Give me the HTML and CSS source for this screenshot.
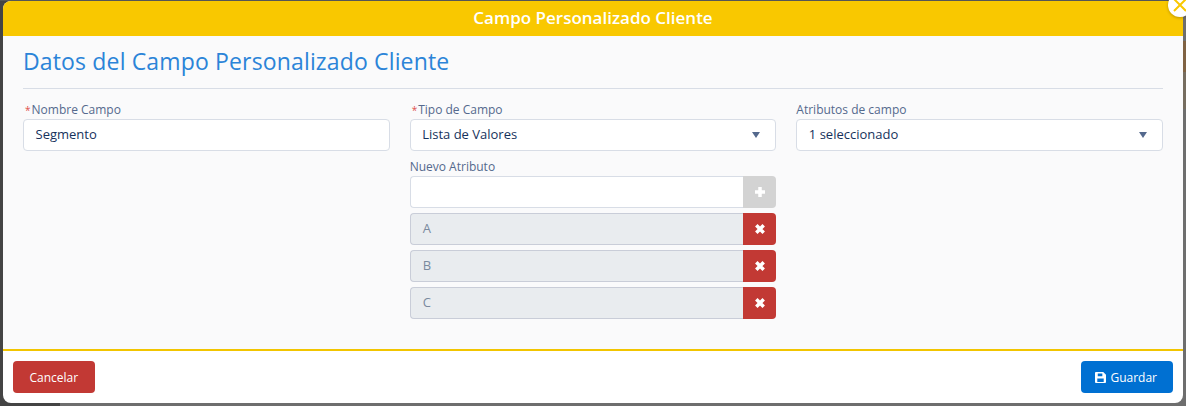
FILE: index.html
```html
<!DOCTYPE html>
<html lang="en">
<head>
    <meta charset="UTF-8">
    <meta name="viewport" content="width=device-width, initial-scale=1.0">
    <title>Campo Personalizado Cliente</title>
    <link rel="stylesheet" href="styles.css">
</head>
<body>
    <div class="modal">
        <button class="close-button">
            <svg viewBox="0 0 14 14" width="14" height="14"><path d="M1 1L13 13M13 1L1 13"></path></svg>
        </button>
        <div class="modal-header">Campo Personalizado Cliente</div>

        <div class="modal-body">
            <div class="section-title">Datos del Campo Personalizado Cliente</div>

            <div class="form-grid">
                <div class="form-col">
                    <label class="form-label"><span class="required">*</span>Nombre Campo</label>
                    <div class="input">Segmento</div>
                </div>

                <div class="form-col">
                    <label class="form-label"><span class="required">*</span>Tipo de Campo</label>
                    <div class="input select">
                        Lista de Valores
                        <span class="caret"></span>
                    </div>

                    <label class="form-label label-spaced">Nuevo Atributo</label>
                    <div class="input-group">
                        <div class="group-field"></div>
                        <div class="group-button add-button">
                            <svg viewBox="0 0 12 12" width="12" height="12"><path d="M6 1V11M1 6H11"></path></svg>
                        </div>
                    </div>
                    <div class="input-group">
                        <div class="group-field disabled">A</div>
                        <div class="group-button remove-button">
                            <svg viewBox="0 0 12 12" width="12" height="12"><path d="M2.300 2.300L9.700 9.700M9.700 2.300L2.300 9.700"></path></svg>
                        </div>
                    </div>
                    <div class="input-group">
                        <div class="group-field disabled">B</div>
                        <div class="group-button remove-button">
                            <svg viewBox="0 0 12 12" width="12" height="12"><path d="M2.300 2.300L9.700 9.700M9.700 2.300L2.300 9.700"></path></svg>
                        </div>
                    </div>
                    <div class="input-group">
                        <div class="group-field disabled">C</div>
                        <div class="group-button remove-button">
                            <svg viewBox="0 0 12 12" width="12" height="12"><path d="M2.300 2.300L9.700 9.700M9.700 2.300L2.300 9.700"></path></svg>
                        </div>
                    </div>
                </div>

                <div class="form-col">
                    <label class="form-label">Atributos de campo</label>
                    <div class="input select">
                        1 seleccionado
                        <span class="caret"></span>
                    </div>
                </div>
            </div>
        </div>

        <div class="modal-footer">
            <button class="button button-cancel">Cancelar</button>
            <button class="button button-save">
                <svg viewBox="0 0 12 12" width="11" height="11"><path fill-rule="evenodd" d="M1 0H9L12 3V11A1 1 0 0 1 11 12H1A1 1 0 0 1 0 11V1A1 1 0 0 1 1 0ZM3 1.500V4.500H8V1.500ZM2.500 7V10.800H9.500V7Z"></path></svg>
                Guardar
            </button>
        </div>
    </div>
</body>
</html>
```

FILE: styles.css
```css
html {
    overflow: hidden;
}

body {
    font-family: "Open Sans", "Noto Sans", Arial, sans-serif;
    background-color: #6e6e6e;
    background-image:
        linear-gradient(#7f6243, #7f6243),
        linear-gradient(#766d60, #766d60),
        linear-gradient(#565656, #565656),
        linear-gradient(to right, #444444 60px, #6e6e6e 60px);
    background-repeat: no-repeat;
    background-position: right 0 top 41px, right 0 top 72px, 0 0, 0 0;
    background-size: 3px 31px, 3px 37px, 100% 1px, 100% 100%;
    color: #16325c;
    margin: 0;
    padding: 1px 3px 3px;
    font-size: 13px;
}

.modal {
    position: relative;
    display: flex;
    flex-direction: column;
    height: 402px;
    background-color: #ffffff;
    border-radius: 8px;
}

.close-button {
    position: absolute;
    top: -8px;
    right: -9px;
    width: 24px;
    height: 24px;
    padding: 0;
    border: none;
    border-radius: 50%;
    background-color: #ffffff;
    box-shadow: 0 1px 3px rgba(0, 0, 0, 0.25);
    display: flex;
    align-items: center;
    justify-content: center;
}

.close-button svg {
    fill: none;
    stroke: #f9c800;
    stroke-width: 2;
}

.modal-header {
    height: 35px;
    line-height: 34px;
    background-color: #f9c800;
    color: #ffffff;
    font-size: 17px;
    font-weight: 600;
    text-align: center;
    border-radius: 8px 8px 0 0;
}

.modal-body {
    flex: 1;
    background-color: #fafafb;
    padding: 0 20px;
    border-bottom: 2px solid #f2c500;
}

.section-title {
    height: 52px;
    line-height: 50px;
    font-size: 23px;
    letter-spacing: 0.15px;
    color: #2b84d8;
    border-bottom: 1px solid #d8dde6;
}

.form-grid {
    display: grid;
    grid-template-columns: repeat(3, 1fr);
    column-gap: 20px;
    margin-top: 12px;
}

.form-label {
    display: block;
    height: 18px;
    line-height: 18px;
    font-size: 12px;
    color: #54698d;
}

.label-spaced {
    margin-top: 7px;
}

.required {
    color: #e0504b;
    font-size: 10px;
    margin: 0 1px 0 2px;
}

.input {
    position: relative;
    box-sizing: border-box;
    height: 32px;
    line-height: 28px;
    padding: 0 11.500px;
    background-color: #ffffff;
    border: 1px solid #d8dde6;
    border-radius: 4px;
}

.caret {
    position: absolute;
    top: 12px;
    right: 15px;
    border-left: 4.500px solid transparent;
    border-right: 4.500px solid transparent;
    border-top: 6px solid #54698d;
}

.input-group {
    display: flex;
    height: 32px;
    margin-bottom: 5px;
}

.group-field {
    flex: 1;
    box-sizing: border-box;
    line-height: 28px;
    padding: 0 12px;
    background-color: #ffffff;
    border: 1px solid #d8dde6;
    border-right: none;
    border-radius: 4px 0 0 4px;
}

.group-field.disabled {
    background-color: #e9ecef;
    border-color: #c9cdd8;
    color: #7a8a9e;
}

.group-button {
    width: 33px;
    display: flex;
    align-items: center;
    justify-content: center;
    border-radius: 0 4px 4px 0;
}

.group-button svg {
    fill: none;
    stroke: #ffffff;
    stroke-width: 3.500;
}

.add-button {
    background-color: #d3d3d3;
}

.remove-button {
    background-color: #c23934;
}

.modal-footer {
    height: 52px;
    padding: 0 10px;
    display: flex;
    align-items: center;
    justify-content: space-between;
}

.button {
    height: 32px;
    border: none;
    border-radius: 4px;
    color: #ffffff;
    font-family: inherit;
    font-size: 12px;
    padding: 0 16.500px;
    display: flex;
    align-items: center;
    gap: 5px;
}

.button-cancel {
    background-color: #c23934;
}

.button-save {
    background-color: #0070d2;
    padding: 0 16px 0 14px;
    gap: 4px;
}

.button-save svg {
    fill: #ffffff;
}
```
